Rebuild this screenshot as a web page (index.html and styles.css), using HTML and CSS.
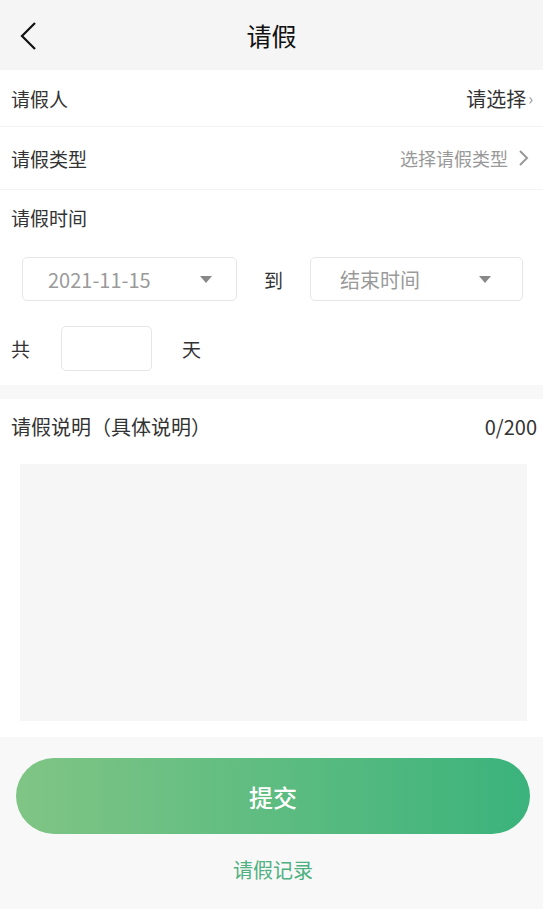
FILE: index.html
```html
<!DOCTYPE html>
<html>
<head>
    <meta charset="utf-8">
    <title>请假</title>
    <link rel="stylesheet" href="styles.css">
</head>
<body>
    <div class="header">
        <svg class="back" width="20" height="30" viewBox="0 0 20 30">
            <path d="M16 2 L3 15 L16 28" fill="none" stroke="#111" stroke-width="2.2"/>
        </svg>
        <div class="title">请假</div>
    </div>

    <div class="row row-first">
        <span class="label">请假人</span>
        <span class="value">请选择<span class="arrow-small">›</span></span>
    </div>
    <div class="row row-type">
        <span class="label">请假类型</span>
        <span class="value value-gray">选择请假类型
            <svg class="arrow" width="12" height="18" viewBox="0 0 12 18">
                <path d="M2 2 L9 9 L2 16" fill="none" stroke="#999" stroke-width="2"/>
            </svg>
        </span>
    </div>

    <div class="time-section">
        <div class="label">请假时间</div>
        <div class="date-row">
            <div class="picker picker-start">
                <span class="picker-text">2021-11-15</span>
                <span class="triangle"></span>
            </div>
            <span class="to">到</span>
            <div class="picker picker-end">
                <span class="picker-text">结束时间</span>
                <span class="triangle"></span>
            </div>
        </div>
        <div class="days-row">
            <span class="label">共</span>
            <div class="days-box"></div>
            <span class="label">天</span>
        </div>
    </div>

    <div class="desc-section">
        <div class="desc-head">
            <span class="label desc-label">请假说明（具体说明）</span>
            <span class="count">0/200</span>
        </div>
        <div class="textarea"></div>
    </div>

    <div class="footer">
        <button class="submit">提交</button>
        <div class="record">请假记录</div>
    </div>
</body>
</html>
```

FILE: styles.css
```css
body {
    margin: 0;
    padding: 0;
    font-family: "Noto Sans CJK SC", "Noto Sans", sans-serif;
    background-color: #f8f8f8;
    color: #333;
}
.header {
    height: 70px;
    background-color: #f5f5f5;
    display: flex;
    align-items: center;
    justify-content: center;
    position: relative;
}
.back {
    position: absolute;
    left: 19px;
    top: 21px;
}
.title {
    font-size: 25px;
    color: #111;
}
.label {
    font-size: 19px;
    color: #333;
}
.row {
    background-color: white;
    display: flex;
    align-items: center;
    justify-content: space-between;
    padding: 0 10px 0 11px;
    border-bottom: 1px solid #f3f3f3;
}
.row-first {
    height: 56px;
}
.row-type {
    height: 62px;
    padding-right: 13px;
}
.value {
    font-size: 20px;
    color: #333;
    display: flex;
    align-items: center;
}
.value-gray {
    font-size: 18px;
    color: #999;
}
.arrow-small {
    font-size: 16px;
    color: #999;
    margin-left: 2px;
}
.arrow {
    margin-left: 10px;
}
.time-section {
    background-color: white;
    padding: 14px 0 14px 11px;
}
.time-section .label {
    line-height: 28px;
}
.date-row {
    display: flex;
    align-items: center;
    margin-top: 25px;
    padding-left: 11px;
}
.picker {
    border: 1px solid #e6e6e6;
    border-radius: 5px;
    display: flex;
    align-items: center;
    justify-content: space-between;
    box-sizing: border-box;
    height: 44px;
}
.picker-start {
    width: 215px;
    padding: 0 24px 0 25px;
}
.picker-end {
    width: 213px;
    padding: 0 31px 0 29px;
}
.picker-text {
    font-size: 20px;
    color: #9a9a9a;
}
.triangle {
    width: 0;
    height: 0;
    border-left: 6px solid transparent;
    border-right: 6px solid transparent;
    border-top: 7px solid #888;
}
.to {
    font-size: 19px;
    color: #333;
    width: 73px;
    text-align: center;
}
.days-row {
    display: flex;
    align-items: center;
    margin-top: 25px;
}
.days-box {
    width: 91px;
    height: 45px;
    box-sizing: border-box;
    border: 1px solid #e6e6e6;
    border-radius: 5px;
    margin: 0 30px 0 31px;
}
.desc-section {
    background-color: white;
    margin-top: 14px;
    padding: 14px 16px 16px 11px;
}
.desc-head {
    display: flex;
    justify-content: space-between;
    align-items: center;
    line-height: 28px;
    margin-right: -10px;
}
.desc-label {
    font-size: 20px;
}
.count {
    font-size: 20px;
    color: #333;
}
.textarea {
    background-color: #f6f6f6;
    height: 257px;
    margin: 23px 0 0 9px;
}
.footer {
    padding: 21px 13px 0 16px;
    text-align: center;
}
.submit {
    width: 100%;
    height: 76px;
    border: none;
    border-radius: 38px;
    background: linear-gradient(to right, #80c585, #3bb37c);
    color: white;
    font-family: "Noto Sans CJK SC", sans-serif;
    font-size: 24px;
    font-weight: 500;
    cursor: pointer;
}
.record {
    margin-top: 21px;
    font-size: 20px;
    color: #4fb081;
}
```
